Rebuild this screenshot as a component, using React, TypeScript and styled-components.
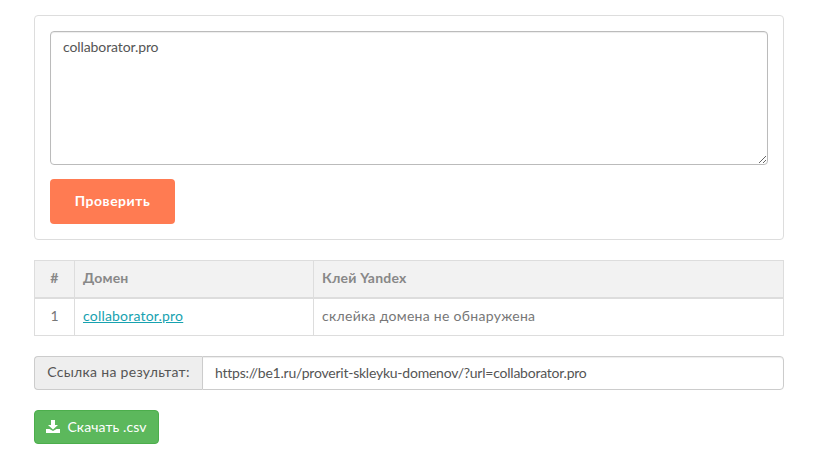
import React from "react";
import styled, { createGlobalStyle } from "styled-components";

const Global = createGlobalStyle`
  html, body { margin: 0; padding: 0; background: #fff; }
  body { font-family: Lato, "Open Sans", sans-serif; font-size: 14px; color: #555; }
  * { box-sizing: border-box; }
`;
const Page = styled.div`
  width: 814px; height: 458px; overflow: hidden;
  padding: 15px 30px 0 34px;
  display: flex; flex-direction: column;
`;
const Panel = styled.div`
  border: 1px solid #ddd; border-radius: 4px; padding: 15px;
  height: 225px; display: flex; flex-direction: column; align-items: flex-start;
`;
const Area = styled.textarea`
  width: 718px; height: 134px; border: 1px solid #bbb; border-radius: 4px;
  padding: 6px 12px; font: 14px Lato, sans-serif; letter-spacing: -0.1px; color: #555;
  box-shadow: inset 0 1px 1px rgba(0,0,0,.075); outline: none; display: block;
`;
const Check = styled.button`
  margin-top: 14px; width: 125px; height: 45px; border: 0; border-radius: 4px;
  padding: 0 0 3px; background: #ff7b52; color: #fff;
  font: 700 14px Lato, "Open Sans", sans-serif; letter-spacing: 0.5px;
`;
const Table = styled.table`
  margin-top: 20px; width: 750px; border-collapse: separate; border-spacing: 0; table-layout: fixed;
  border: 1px solid #ddd; border-width: 1px 1px 0 1px;
`;
const Th = styled.th<{ $w: number; $center?: boolean }>`
  width: ${p => p.$w}px; height: 38px; background: #f2f2f2; border-right: 1px solid #ddd;
  border-bottom: 2px solid #ddd; padding: 0 8px 3px; font-size: 14px; font-weight: 700; color: #888;
  letter-spacing: 0.2px; text-align: ${p => p.$center ? "center" : "left"};
  &:last-child { border-right: 0; }
`;
const Td = styled.td<{ $center?: boolean }>`
  height: 37px; border-right: 1px solid #ddd; border-bottom: 1px solid #ddd; padding: 0 8px 3px; color: #777; font-size: 14px;
  text-align: ${p => p.$center ? "center" : "left"};
  &:last-child { border-right: 0; letter-spacing: 0.29px; }
`;
const Link = styled.a`
  color: #17a2b0; text-decoration: underline; letter-spacing: 0.2px;
`;
const Group = styled.div`
  margin-top: 20px; display: flex; height: 34px; width: 750px;
`;
const Addon = styled.span`
  width: 168px; background: #eee; border: 1px solid #ccc; border-right: 0; padding-bottom: 3px;
  border-radius: 4px 0 0 4px; display: flex; align-items: center; justify-content: center; color: #555;
  letter-spacing: 0.3px;
`;
const Field = styled.input`
  flex: 1; border: 1px solid #ccc; border-radius: 0 4px 4px 0; padding: 4px 12px 6px;
  font: 14px Lato, sans-serif; letter-spacing: -0.23px; color: #555; outline: none;
  box-shadow: inset 0 1px 1px rgba(0,0,0,.075);
`;
const Download = styled.button`
  margin-top: 20px; width: 125px; height: 34px; background: #5cb85c;
  border: 1px solid #4cae4c; border-radius: 4px; color: #fff; padding: 0 0 2px;
  font: 14px Lato, "Open Sans", sans-serif; letter-spacing: 0.1px;
  display: flex; align-items: center; justify-content: center; gap: 7px;
`;

export default function App() {
  return (
    <Page>
      <Global />
      <Panel>
        <Area defaultValue="collaborator.pro" />
        <Check>Проверить</Check>
      </Panel>
      <Table>
        <thead>
          <tr><Th $w={40} $center>#</Th><Th $w={239}>Домен</Th><Th $w={469}>Клей Yandex</Th></tr>
        </thead>
        <tbody>
          <tr>
            <Td $center>1</Td>
            <Td><Link href="#">collaborator.pro</Link></Td>
            <Td>склейка домена не обнаружена</Td>
          </tr>
        </tbody>
      </Table>
      <Group>
        <Addon>Ссылка на результат:</Addon>
        <Field readOnly value="https://be1.ru/proverit-skleyku-domenov/?url=collaborator.pro" />
      </Group>
      <Download>
        <svg width="14" height="13" viewBox="0 0 14 13" fill="#fff">
          <path d="M5 0h4v5h3L7 9.5 2 5h3z" />
          <path d="M0 9h3.5L7 11 10.5 9H14v4H0z" />
        </svg>
        Скачать .csv
      </Download>
    </Page>
  );
}
